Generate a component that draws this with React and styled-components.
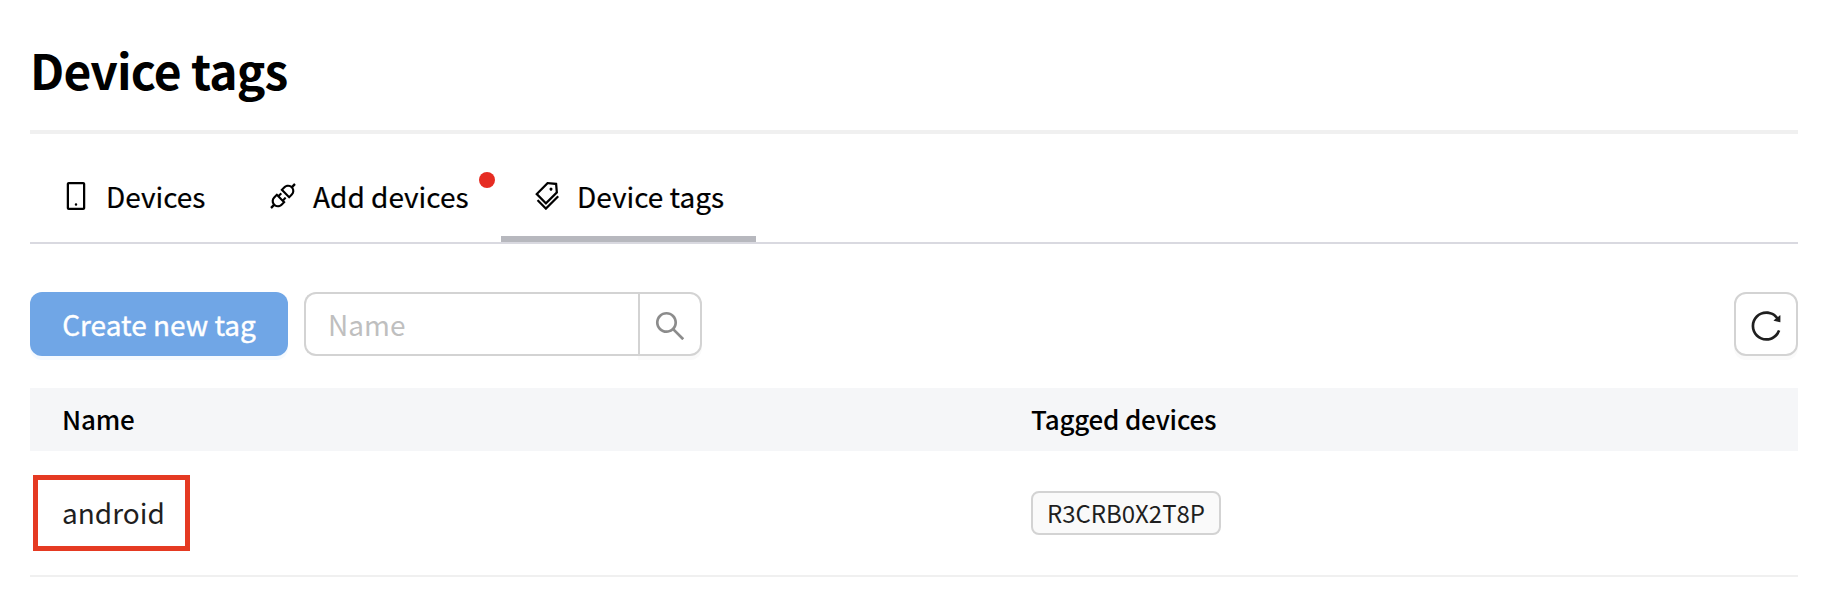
import React from "react";
import styled, { createGlobalStyle } from "styled-components";
import {
  AiOutlineMobile,
  AiOutlineApi,
  AiOutlineTags,
  AiOutlineSearch,
  AiOutlineReload,
} from "react-icons/ai";

const GlobalStyle = createGlobalStyle`
  * { box-sizing: border-box; }
  body {
    margin: 0;
    background: #fff;
    color: #000;
    font-family: "Noto Sans CJK JP", "Noto Sans", sans-serif;
    font-size: 28px;
    line-height: 44px;
  }
  button, input { font: inherit; }
  svg { display: block; flex: none; }
`;

const Page = styled.main`
  height: 612px;
  padding: 0 30px;
  overflow: hidden;
`;

const Header = styled.header`
  height: 134px;
  padding-top: 34px;
  border-bottom: 4px solid #f0f0f0;
`;

const Title = styled.h1`
  margin: 0;
  font-size: 48px;
  line-height: 70px;
  font-weight: 700;
  letter-spacing: -0.85px;
`;

const Tabs = styled.nav`
  display: flex;
  height: 110px;
  border-bottom: 2px solid #d9d9e0;
`;

const Tab = styled.div`
  position: relative;
  display: flex;
  align-items: center;
  gap: 14px;
  width: ${(p) => p.$width}px;
  padding: 28px 0 6px 30px;
  border-bottom: 6px solid ${(p) => (p.$active ? "#b7b8be" : "transparent")};
  white-space: nowrap;
  -webkit-text-stroke: 0.2px currentColor;
`;

const Dot = styled.span`
  position: absolute;
  top: 38px;
  right: 6px;
  width: 16px;
  height: 16px;
  border-radius: 50%;
  background: #e62c22;
`;

const Toolbar = styled.div`
  display: flex;
  gap: 16px;
  padding: 48px 0 32px;
`;

const PrimaryButton = styled.button`
  width: 258px;
  height: 64px;
  padding: 0;
  border: 0;
  border-radius: 12px;
  background: #70a6e6;
  box-shadow: 0 4px 0 #f5faff;
  color: #fff;
  -webkit-text-stroke: 0.4px currentColor;
`;

const Search = styled.div`
  display: flex;
  width: 398px;
  height: 64px;
`;

const SearchInput = styled.input`
  flex: 1;
  min-width: 0;
  padding: 0 22px;
  border: 2px solid #d3d3d3;
  border-right: 0;
  border-radius: 12px 0 0 12px;
  outline: 0;
  background: transparent;
  &::placeholder { color: #bfbfbf; opacity: 1; }
`;

const IconButton = styled.button`
  display: flex;
  align-items: center;
  justify-content: center;
  width: 64px;
  height: 64px;
  padding: 4px 0 0;
  border: 2px solid #d3d3d3;
  border-radius: 12px;
  background: #fff;
  box-shadow: 0 4px 0 #fafafa;
  color: #1f1f1f;
`;

const SearchButton = styled(IconButton)`
  border-radius: 0 12px 12px 0;
  color: #8c8c8c;
`;

const ReloadButton = styled(IconButton)`
  margin-left: auto;
`;

const TableHead = styled.div`
  display: grid;
  grid-template-columns: 969px 1fr;
  align-items: center;
  height: 63px;
  padding: 0 0 2px 32px;
  background: #f5f6f8;
  font-size: 26px;
  font-weight: 500;
  letter-spacing: -0.2px;
`;

const TableRow = styled.div`
  display: grid;
  grid-template-columns: 969px 1fr;
  align-items: center;
  height: 126px;
  padding-left: 3px;
  border-bottom: 2px solid #f0f0f0;
  color: #1f1f1f;
`;

const HighlightedName = styled.div`
  justify-self: start;
  width: 157px;
  height: 76px;
  padding: 10px 0 0 24px;
  border: 5px solid #e53a22;
`;

const DeviceCell = styled.div`
  padding-left: 29px;
`;

const DeviceTag = styled.span`
  display: flex;
  align-items: center;
  justify-content: center;
  width: 190px;
  height: 44px;
  border: 2px solid #d3d3d3;
  border-radius: 8px;
  background: #fafafa;
  font-size: 24px;
`;

export default function App() {
  return (
    <>
      <GlobalStyle />
      <Page>
        <Header>
          <Title>Device tags</Title>
        </Header>
        <Tabs>
          <Tab $width={207}>
            <AiOutlineMobile size={32} />
            <span>Devices</span>
          </Tab>
          <Tab $width={264}>
            <AiOutlineApi size={32} />
            <span>Add devices</span>
            <Dot />
          </Tab>
          <Tab $width={255} $active>
            <AiOutlineTags size={32} />
            <span>Device tags</span>
          </Tab>
        </Tabs>
        <Toolbar>
          <PrimaryButton>Create new tag</PrimaryButton>
          <Search>
            <SearchInput placeholder="Name" />
            <SearchButton aria-label="Search">
              <AiOutlineSearch size={36} />
            </SearchButton>
          </Search>
          <ReloadButton aria-label="Reload">
            <AiOutlineReload size={36} />
          </ReloadButton>
        </Toolbar>
        <TableHead>
          <span>Name</span>
          <span>Tagged devices</span>
        </TableHead>
        <TableRow>
          <HighlightedName>android</HighlightedName>
          <DeviceCell>
            <DeviceTag>R3CRB0X2T8P</DeviceTag>
          </DeviceCell>
        </TableRow>
      </Page>
    </>
  );
}
